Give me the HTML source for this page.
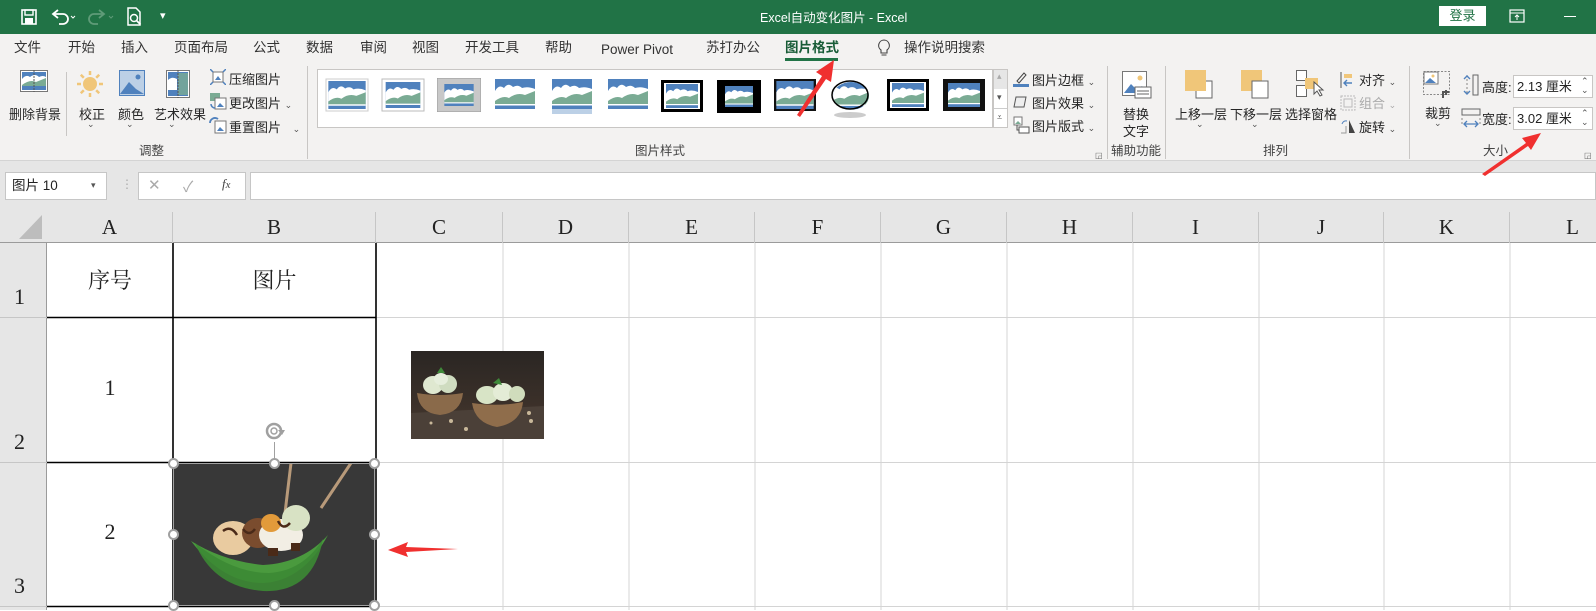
<!DOCTYPE html>
<html><head><meta charset="utf-8">
<style>
*{margin:0;padding:0;box-sizing:border-box}
body{width:1596px;height:610px;overflow:hidden;background:#fff;font-family:"Liberation Sans","Noto Sans CJK SC",sans-serif;position:relative;color:#222}
.a{position:absolute;white-space:nowrap}
.t{font-size:13px;color:#262626}
.tab{position:absolute;top:38px;font-size:13.5px;color:#333;line-height:20px;height:20px}
.ch{font-size:9px;color:#555}
.gl{position:absolute;top:140px;font-size:12.5px;color:#444}
.sep{position:absolute;top:68px;width:1px;height:88px;background:#c8c6c4}
.col{position:absolute;top:212px;height:31px;border-right:1px solid #c6c6c6;text-align:center;font-family:"Liberation Serif",serif;font-size:21px;line-height:31px;color:#222}
.cell{position:absolute;font-family:"Liberation Serif","Noto Serif CJK SC",serif;font-size:22px;color:#222;text-align:center}
.rn{position:absolute;left:0;width:46px;font-family:"Liberation Serif",serif;font-size:22px;text-align:left;padding-left:14px}
.hd{position:absolute;width:11px;height:11px;border-radius:50%;background:#fff;border:2px solid #a0a0a0}
</style></head><body>
<svg width="0" height="0" style="position:absolute">
<defs>
<symbol id="th" viewBox="0 0 40 30">
<rect x="0" y="0" width="40" height="30" fill="#4f81bd"/>
<path d="M0 12 Q4 5 9 9 Q13 3 18 8 Q23 5 27 9 Q33 7 40 10 L40 25 L0 25Z" fill="#fff"/>
<path d="M0 22 Q8 16 14 19 Q22 13 30 16 L40 12 L40 25 L0 25Z" fill="#7aab94"/>
<rect x="0" y="25" width="40" height="1.5" fill="#fff"/>
</symbol>
</defs></svg>

<!-- title bar -->
<div class="a" style="left:0;top:0;width:1596px;height:34px;background:#217346"></div>
<svg class="a" style="left:20px;top:8px" width="18" height="18" viewBox="0 0 18 18"><rect x="2" y="2" width="14" height="14" fill="none" stroke="#fff" stroke-width="1.6"/><rect x="5" y="2" width="8" height="5" fill="none" stroke="#fff" stroke-width="1.4"/><rect x="5" y="10" width="8" height="6" fill="#fff"/></svg>
<svg class="a" style="left:50px;top:8px" width="28" height="18" viewBox="0 0 28 18"><path d="M4 6 h9 a5 5 0 0 1 0 10 h-4" fill="none" stroke="#fff" stroke-width="1.8"/><path d="M8 2 L3 6 L8 10" fill="none" stroke="#fff" stroke-width="1.8"/><path d="M21 8 l2 2 l2-2" fill="none" stroke="#fff" stroke-width="1"/></svg>
<svg class="a" style="left:88px;top:8px" width="28" height="18" viewBox="0 0 28 18"><path d="M15 6 h-9 a5 5 0 0 0 0 10 h4" fill="none" stroke="#5f9b78" stroke-width="1.8"/><path d="M11 2 L16 6 L11 10" fill="none" stroke="#5f9b78" stroke-width="1.8"/><path d="M21 8 l2 2 l2-2" fill="none" stroke="#5f9b78" stroke-width="1"/></svg>
<svg class="a" style="left:126px;top:7px" width="18" height="20" viewBox="0 0 18 20"><path d="M2 1 h8 l4 4 v13 h-12z" fill="none" stroke="#fff" stroke-width="1.5"/><circle cx="8" cy="11" r="3.5" fill="none" stroke="#fff" stroke-width="1.5"/><path d="M10.5 13.5 l4 4" stroke="#fff" stroke-width="1.8"/></svg>
<div class="a" style="left:160px;top:9px;color:#fff;font-size:11px">▾</div>
<div class="a" style="left:760px;top:7px;color:#fff;font-size:12.5px">Excel自动变化图片  -  Excel</div>
<div class="a" style="left:1439px;top:6px;width:47px;height:20px;background:#fff;color:#217346;font-size:13px;text-align:center;line-height:20px">登录</div>
<svg class="a" style="left:1509px;top:9px" width="16" height="14" viewBox="0 0 16 14"><rect x="1" y="1" width="14" height="12" fill="none" stroke="#fff" stroke-width="1.2"/><path d="M1 4 h14 M8 6 v5 M6 8 l2-2 l2 2" stroke="#fff" stroke-width="1" fill="none"/></svg>
<div class="a" style="left:1564px;top:16px;width:12px;height:1px;background:#fff"></div>

<!-- tabs + ribbon -->
<div class="a" style="left:0;top:34px;width:1596px;height:129px;background:#f3f2f1"></div>
<div class="tab" style="left:14px">文件</div>
<div class="tab" style="left:68px">开始</div>
<div class="tab" style="left:121px">插入</div>
<div class="tab" style="left:174px">页面布局</div>
<div class="tab" style="left:253px">公式</div>
<div class="tab" style="left:306px">数据</div>
<div class="tab" style="left:360px">审阅</div>
<div class="tab" style="left:412px">视图</div>
<div class="tab" style="left:465px">开发工具</div>
<div class="tab" style="left:545px">帮助</div>
<div class="tab" style="left:601px;top:40px">Power Pivot</div>
<div class="tab" style="left:706px">苏打办公</div>
<div class="tab" style="left:785px;color:#185c37;font-weight:bold">图片格式</div>
<div class="a" style="left:785px;top:58px;width:53px;height:3px;background:#217346"></div>
<svg class="a" style="left:877px;top:39px" width="14" height="18" viewBox="0 0 14 18"><path d="M7 1 a5.5 5.5 0 0 1 3 10 v3 h-6 v-3 a5.5 5.5 0 0 1 3-10z" fill="none" stroke="#444" stroke-width="1.1"/><path d="M4.5 16 h5" stroke="#444"/></svg>
<div class="tab" style="left:904px">操作说明搜索</div>

<!-- Adjust group -->
<svg class="a" style="left:20px;top:70px" width="28" height="22" viewBox="0 0 28 22"><rect x="0.5" y="0.5" width="27" height="21" fill="#fff" stroke="#777"/><rect x="2" y="2" width="24" height="18" fill="#4f81bd"/><path d="M2 9 Q6 4 10 7 Q15 3 19 7 Q23 5 26 7 V16 H2Z" fill="#fff"/><path d="M2 15 Q10 9 16 12 L26 8 V16 H2Z" fill="#7aab94"/><path d="M14 0 V22" stroke="#555" stroke-dasharray="2 1"/></svg>
<div class="a t" style="left:9px;top:104px">删除背景</div>
<div class="sep" style="left:66px;top:72px;height:64px"></div>
<svg class="a" style="left:76px;top:70px" width="28" height="28" viewBox="0 0 28 28"><circle cx="14" cy="14" r="7" fill="#f0c679"/><g stroke="#f0c679" stroke-width="2.5"><path d="M14 1v4M14 23v4M1 14h4M23 14h4M4.8 4.8l3 3M20.2 20.2l3 3M4.8 23.2l3-3M20.2 7.8l3-3"/></g></svg>
<div class="a t" style="left:79px;top:104px">校正</div><div class="a ch" style="left:87px;top:119px">⌄</div>
<svg class="a" style="left:119px;top:70px" width="26" height="26" viewBox="0 0 26 26"><rect x="0.5" y="0.5" width="25" height="25" fill="#bcd0e6" stroke="#4f81bd"/><circle cx="19" cy="7" r="2.5" fill="#4f81bd"/><path d="M1 24 L10 12 L17 19 L25 24Z" fill="#4f81bd"/></svg>
<div class="a t" style="left:118px;top:104px">颜色</div><div class="a ch" style="left:126px;top:119px">⌄</div>
<svg class="a" style="left:166px;top:70px" width="24" height="28" viewBox="0 0 24 28"><rect x="0.5" y="0.5" width="23" height="27" fill="#fff" stroke="#777"/><rect x="2" y="2" width="20" height="24" fill="#4f81bd"/><path d="M2 10 Q6 6 11 9 V20 H2Z" fill="#fff"/><rect x="12" y="3" width="10" height="22" fill="#7aab94" opacity=".8"/><path d="M12 0V28" stroke="#555" stroke-dasharray="2 1"/></svg>
<div class="a t" style="left:154px;top:104px">艺术效果</div><div class="a ch" style="left:168px;top:119px">⌄</div>
<svg class="a" style="left:210px;top:69px" width="16" height="16" viewBox="0 0 16 16"><rect x="3" y="3" width="10" height="10" fill="#fff" stroke="#777"/><path d="M5 11 L8 7 L11 11Z" fill="#4f81bd"/><path d="M0 0l3 3M16 0l-3 3M0 16l3-3M16 16l-3-3" stroke="#4f81bd" stroke-width="1.5"/></svg>
<div class="a t" style="left:229px;top:69px">压缩图片</div>
<svg class="a" style="left:209px;top:92px" width="18" height="18" viewBox="0 0 18 18"><rect x="1" y="1" width="10" height="8" fill="#7aab94"/><rect x="6" y="6" width="11" height="11" fill="#fff" stroke="#777"/><path d="M8 15 L11 11 L15 15Z" fill="#4f81bd"/><path d="M2 12 a4 4 0 0 0 4 4" stroke="#4f81bd" fill="none" stroke-width="1.5"/></svg>
<div class="a t" style="left:229px;top:93px">更改图片 <span class="ch">⌄</span></div>
<svg class="a" style="left:209px;top:116px" width="18" height="18" viewBox="0 0 18 18"><rect x="6" y="5" width="11" height="12" fill="#fff" stroke="#777"/><path d="M8 15 L11 11 L15 15Z" fill="#4f81bd"/><path d="M1 7 a5 5 0 0 1 8-4" stroke="#4f81bd" fill="none" stroke-width="1.8"/></svg>
<div class="a t" style="left:229px;top:117px">重置图片 <span class="ch" style="margin-left:8px">⌄</span></div>
<div class="gl" style="left:139px">调整</div>
<div class="sep" style="left:307px;top:66px;height:93px"></div>

<!-- gallery -->
<div class="a" style="left:317px;top:69px;width:676px;height:59px;background:#fff;border:1px solid #c8c6c4"></div>
<div class="a" style="left:993px;top:69px;width:15px;height:59px;background:#fff;border:1px solid #c8c6c4"></div>
<div class="a" style="left:994px;top:70px;width:13px;height:19px;background:#e6e6e6"></div>
<div class="a ch" style="left:997px;top:71px;color:#aaa">▴</div>
<div class="a ch" style="left:997px;top:92px">▾</div>
<div class="a" style="left:994px;top:108px;width:13px;height:1px;background:#ccc"></div>
<div class="a ch" style="left:997px;top:112px">⩡</div>

<svg class="a" style="left:325px;top:78px" width="44" height="34"><rect x="1" y="1" width="42" height="32" fill="#fff" stroke="#ccc"/><use href="#th" x="3" y="3" width="38" height="28"/></svg>
<svg class="a" style="left:381px;top:78px" width="44" height="34"><rect x="1" y="1" width="42" height="32" fill="#fff" stroke="#bbb"/><use href="#th" x="4" y="4" width="36" height="26"/></svg>
<svg class="a" style="left:437px;top:78px" width="44" height="34"><rect x="0" y="0" width="44" height="34" fill="#c8c8c8" stroke="#999"/><use href="#th" x="6" y="6" width="32" height="22"/></svg>
<svg class="a" style="left:494px;top:79px" width="42" height="31"><use href="#th" x="1" y="0" width="40" height="30"/></svg>
<svg class="a" style="left:551px;top:79px" width="42" height="36"><use href="#th" x="1" y="0" width="40" height="30"/><rect x="1" y="30" width="40" height="5" fill="#bcd0e6"/></svg>
<svg class="a" style="left:607px;top:79px" width="42" height="31"><use href="#th" x="1" y="0" width="40" height="30"/></svg>
<svg class="a" style="left:661px;top:80px" width="42" height="32"><rect x="0" y="0" width="42" height="32" fill="#000"/><rect x="3" y="3" width="36" height="26" fill="#fff"/><use href="#th" x="4" y="4" width="34" height="24"/></svg>
<svg class="a" style="left:717px;top:80px" width="44" height="33"><rect x="0" y="0" width="44" height="33" fill="#000"/><use href="#th" x="6" y="6" width="32" height="21"/></svg>
<svg class="a" style="left:774px;top:79px" width="42" height="33"><rect x="0" y="0" width="42" height="32" fill="#111"/><use href="#th" x="2" y="2" width="38" height="28"/></svg>
<svg class="a" style="left:830px;top:79px" width="40" height="40"><ellipse cx="20" cy="36" rx="16" ry="3" fill="#ccc"/><clipPath id="el"><ellipse cx="20" cy="16" rx="18" ry="14"/></clipPath><use href="#th" x="1" y="1" width="38" height="30" clip-path="url(#el)"/><ellipse cx="20" cy="16" rx="18" ry="14" fill="none" stroke="#000" stroke-width="1.5"/></svg>
<svg class="a" style="left:887px;top:79px" width="42" height="32"><rect x="0" y="0" width="42" height="32" fill="#000"/><rect x="3" y="3" width="36" height="26" fill="#fff"/><use href="#th" x="4" y="4" width="34" height="24"/></svg>
<svg class="a" style="left:943px;top:79px" width="42" height="32"><rect x="0" y="0" width="42" height="32" fill="#111"/><use href="#th" x="4" y="4" width="34" height="24"/></svg>

<svg class="a" style="left:1013px;top:71px" width="16" height="16" viewBox="0 0 16 16"><path d="M4 10 L11 2 L13 4 L6 12Z" fill="none" stroke="#444"/><rect x="0" y="13" width="16" height="3" fill="#4f81bd"/></svg>
<div class="a t" style="left:1032px;top:70px">图片边框 <span class="ch">⌄</span></div>
<svg class="a" style="left:1013px;top:94px" width="16" height="16" viewBox="0 0 16 16"><path d="M3 3 h10 l-2 10 h-10z" fill="#eee" stroke="#555"/></svg>
<div class="a t" style="left:1032px;top:93px">图片效果 <span class="ch">⌄</span></div>
<svg class="a" style="left:1013px;top:116px" width="17" height="18" viewBox="0 0 17 18"><rect x="1" y="1" width="8" height="8" fill="#fff" stroke="#777"/><path d="M2 8 l3-3 l3 3z" fill="#7aab94"/><rect x="6" y="11" width="10" height="6" fill="#fff" stroke="#555"/><path d="M4 9v5h2" stroke="#555" fill="none"/></svg>
<div class="a t" style="left:1032px;top:116px">图片版式 <span class="ch">⌄</span></div>
<div class="gl" style="left:635px">图片样式</div>
<div class="a" style="left:1095px;top:151px;font-size:8px;color:#666">◲</div>
<div class="sep" style="left:1107px;top:66px;height:93px"></div>

<svg class="a" style="left:1122px;top:71px" width="30" height="30" viewBox="0 0 30 30"><rect x="0.5" y="0.5" width="24" height="24" fill="#fff" stroke="#777"/><circle cx="18" cy="7" r="2.5" fill="#f0c679"/><path d="M2 22 L9 13 L15 19 L20 15 L24 22Z" fill="#4f81bd"/><rect x="13" y="16" width="16" height="11" fill="#fff" stroke="#666"/><path d="M15 20h12M15 23h12" stroke="#666"/></svg>
<div class="a t" style="left:1123px;top:104px">替换</div>
<div class="a t" style="left:1123px;top:121px">文字</div>
<div class="gl" style="left:1111px">辅助功能</div>
<div class="sep" style="left:1165px;top:66px;height:93px"></div>

<svg class="a" style="left:1185px;top:70px" width="30" height="30"><rect x="11" y="11" width="16" height="17" fill="#fff" stroke="#666"/><rect x="0" y="0" width="21" height="21" fill="#f0c679"/></svg>
<div class="a t" style="left:1175px;top:104px">上移一层</div><div class="a ch" style="left:1196px;top:119px">⌄</div>
<svg class="a" style="left:1241px;top:70px" width="30" height="30"><rect x="0" y="0" width="21" height="21" fill="#f0c679"/><rect x="11" y="11" width="16" height="17" fill="#fff" stroke="#666"/></svg>
<div class="a t" style="left:1230px;top:104px">下移一层</div><div class="a ch" style="left:1251px;top:119px">⌄</div>
<svg class="a" style="left:1296px;top:70px" width="30" height="30"><rect x="0.5" y="0.5" width="10" height="10" fill="#fff" stroke="#666"/><rect x="0.5" y="15.5" width="10" height="11" fill="#fff" stroke="#666"/><rect x="9" y="8" width="13" height="11" fill="#f0c679"/><path d="M18 12 v12 l3-3 l3 5 l2-1 l-3-5 h4z" fill="#fff" stroke="#555"/></svg>
<div class="a t" style="left:1285px;top:104px">选择窗格</div>
<svg class="a" style="left:1340px;top:72px" width="16" height="16"><path d="M1 0v16" stroke="#555"/><rect x="4" y="2" width="8" height="4" fill="#f0c679"/><path d="M12 11 H4 M7 8 l-3 3 l3 3" stroke="#4f81bd" fill="none" stroke-width="1.4"/></svg>
<div class="a t" style="left:1359px;top:70px">对齐 <span class="ch">⌄</span></div>
<svg class="a" style="left:1340px;top:95px" width="16" height="16"><rect x="1" y="1" width="14" height="14" fill="none" stroke="#bbb" stroke-dasharray="2 1"/><rect x="4" y="4" width="8" height="8" fill="none" stroke="#bbb"/></svg>
<div class="a t" style="left:1359px;top:93px;color:#aaa">组合 <span class="ch" style="color:#aaa">⌄</span></div>
<svg class="a" style="left:1340px;top:118px" width="16" height="16"><path d="M9 2 L15 15 H9Z" fill="#444"/><path d="M1 15 L6 15 L6 8" fill="none" stroke="#999"/><path d="M2 6 a4 4 0 0 1 5-3" stroke="#4f81bd" fill="none"/></svg>
<div class="a t" style="left:1359px;top:117px">旋转 <span class="ch">⌄</span></div>
<div class="gl" style="left:1263px">排列</div>
<div class="sep" style="left:1409px;top:66px;height:93px"></div>

<svg class="a" style="left:1423px;top:71px" width="30" height="30"><rect x="0.5" y="0.5" width="26" height="23" fill="none" stroke="#888" stroke-dasharray="2 1.5"/><rect x="1" y="1" width="14" height="12" fill="#fff" stroke="#777"/><path d="M2 12 l5-5 l6 5z" fill="#4f81bd"/><circle cx="10" cy="5" r="1.5" fill="#f0c679"/><path d="M20 27 v-6 h6 M23 19 v5" stroke="#555" stroke-width="2" fill="none"/></svg>
<div class="a t" style="left:1425px;top:103px">裁剪</div><div class="a ch" style="left:1434px;top:118px">⌄</div>
<svg class="a" style="left:1462px;top:74px" width="18" height="22"><path d="M5 1 v20" stroke="#888" stroke-dasharray="2 2"/><path d="M2 5 l3-3 l3 3 M2 17 l3 3 l3-3" stroke="#4f81bd" fill="none" stroke-width="1.4"/><rect x="11" y="1" width="5" height="20" fill="none" stroke="#666"/></svg>
<div class="a t" style="left:1482px;top:77px">高度:</div>
<div class="a" style="left:1513px;top:75px;width:80px;height:23px;background:#fff;border:1px solid #c8c6c4;font-size:13px;line-height:21px;padding-left:3px">2.13 厘米</div>
<div class="a ch" style="left:1581px;top:76px">⌃</div><div class="a ch" style="left:1581px;top:85px">⌄</div>
<svg class="a" style="left:1461px;top:108px" width="20" height="20"><rect x="1" y="1" width="18" height="6" fill="none" stroke="#666"/><path d="M1 10 v6 M19 10 v6" stroke="#888" stroke-dasharray="2 2"/><path d="M4 16 h12 M6 13 l-3 3 l3 3 M14 13 l3 3 l-3 3" stroke="#4f81bd" fill="none" stroke-width="1.3"/></svg>
<div class="a t" style="left:1482px;top:109px">宽度:</div>
<div class="a" style="left:1513px;top:107px;width:80px;height:23px;background:#fff;border:1px solid #c8c6c4;font-size:13px;line-height:21px;padding-left:3px">3.02 厘米</div>
<div class="a ch" style="left:1581px;top:108px">⌃</div><div class="a ch" style="left:1581px;top:117px">⌄</div>
<div class="gl" style="left:1483px">大小</div>
<div class="a" style="left:1584px;top:151px;font-size:8px;color:#666">◲</div>

<!-- formula bar -->
<div class="a" style="left:0;top:160px;width:1596px;height:1px;background:#d4d4d4"></div>
<div class="a" style="left:0;top:161px;width:1596px;height:45px;background:#e6e6e6"></div>
<div class="a" style="left:5px;top:172px;width:102px;height:28px;background:#fff;border:1px solid #c6c6c6;font-size:13.5px;line-height:26px;padding-left:6px">图片 10</div>
<div class="a ch" style="left:91px;top:180px">▾</div>
<div class="a" style="left:121px;top:177px;color:#aaa;font-size:12px">⋮</div>
<div class="a" style="left:138px;top:172px;width:108px;height:28px;background:#fff;border:1px solid #c6c6c6"></div>
<div class="a" style="left:148px;top:176px;color:#aaa;font-size:15px">✕</div>
<div class="a" style="left:183px;top:176px;color:#aaa;font-size:15px">✓</div>
<div class="a" style="left:222px;top:176px;color:#444;font-size:13px;font-style:italic;font-family:'Liberation Serif',serif">f<small>x</small></div>
<div class="a" style="left:250px;top:172px;width:1346px;height:28px;background:#fff;border:1px solid #c6c6c6"></div>

<!-- headers -->
<div class="a" style="left:0;top:206px;width:1596px;height:37px;background:#e6e6e6"></div>
<div class="a" style="left:0;top:242px;width:1596px;height:1px;background:#9b9b9b"></div>
<svg class="a" style="left:18px;top:214px" width="25" height="26"><path d="M24 1 V25 H1Z" fill="#bdbdbd"/></svg>
<div class="a" style="left:0;top:243px;width:47px;height:367px;background:#e6e6e6;border-right:1px solid #9b9b9b"></div>
<div class="col" style="left:47px;width:126px">A</div>
<div class="col" style="left:173px;width:203px">B</div>
<div class="col" style="left:376px;width:127px">C</div>
<div class="col" style="left:503px;width:126px">D</div>
<div class="col" style="left:629px;width:126px">E</div>
<div class="col" style="left:755px;width:126px">F</div>
<div class="col" style="left:881px;width:126px">G</div>
<div class="col" style="left:1007px;width:126px">H</div>
<div class="col" style="left:1133px;width:126px">I</div>
<div class="col" style="left:1259px;width:125px">J</div>
<div class="col" style="left:1384px;width:126px">K</div>
<div class="col" style="left:1510px;width:126px">L</div>
<div class="rn" style="top:284px">1</div>
<div class="rn" style="top:429px">2</div>
<div class="rn" style="top:573px">3</div>
<div class="a" style="left:0;top:317px;width:47px;height:1px;background:#c6c6c6"></div>
<div class="a" style="left:0;top:462px;width:47px;height:1px;background:#c6c6c6"></div>
<div class="a" style="left:0;top:606px;width:47px;height:1px;background:#c6c6c6"></div>

<!-- grid lines -->
<svg class="a" style="left:47px;top:243px" width="1549" height="367">
<g stroke="#d4d4d4" stroke-width="1">
<path d="M329 0V367M456 0V367M582 0V367M708 0V367M834 0V367M960 0V367M1086 0V367M1212 0V367M1337 0V367M1463 0V367"/>
<path d="M329 74.5H1549M329 219.5H1549M329 363.5H1549"/>
</g>
<g stroke="#000" stroke-width="1.6">
<path d="M0 74.5H329M0 219.5H329M0 363.5H329M126 0V367M329 0V367"/>
</g>
</svg>
<div class="cell" style="left:47px;top:264px;width:126px">序号</div>
<div class="cell" style="left:173px;top:264px;width:203px">图片</div>
<div class="cell" style="left:47px;top:375px;width:126px">1</div>
<div class="cell" style="left:47px;top:519px;width:126px">2</div>

<!-- picture 1 -->
<svg class="a" style="left:411px;top:351px" width="133" height="88" viewBox="0 0 133 88">
<defs><linearGradient id="bg1" x1="0" y1="0" x2="0" y2="1"><stop offset="0" stop-color="#2a2623"/><stop offset=".6" stop-color="#3b3029"/><stop offset="1" stop-color="#4a3d33"/></linearGradient></defs>
<rect width="133" height="88" fill="url(#bg1)"/>
<path d="M0 62 L133 55 V88 H0Z" fill="#4b4038"/>
<path d="M6 42 Q28 46 52 42 Q50 62 29 64 Q8 62 6 42Z" fill="#8a6a4a"/>
<ellipse cx="22" cy="34" rx="10" ry="9" fill="#dfe8d0"/><ellipse cx="37" cy="33" rx="9" ry="9" fill="#cfdcc0"/><ellipse cx="30" cy="28" rx="7" ry="6" fill="#e6eedc"/>
<path d="M26 22 l4 -6 l4 6z" fill="#3f8a3a"/>
<path d="M61 52 Q88 56 112 51 Q110 72 86 76 Q64 72 61 52Z" fill="#8f6d4b"/>
<ellipse cx="76" cy="44" rx="11" ry="9" fill="#d8e4c6"/><ellipse cx="92" cy="41" rx="10" ry="9" fill="#e4ecd6"/><ellipse cx="106" cy="43" rx="8" ry="8" fill="#d0dcbc"/>
<path d="M82 32 l6 -5 l3 7z" fill="#3f8a3a"/>
<g fill="#c9b89a"><circle cx="40" cy="70" r="2"/><circle cx="55" cy="78" r="2"/><circle cx="118" cy="62" r="2"/><circle cx="120" cy="70" r="2"/><circle cx="20" cy="72" r="1.5"/></g>
</svg>

<!-- picture 2 selected -->
<svg class="a" style="left:173px;top:463px" width="202" height="143" viewBox="0 0 202 143">
<rect width="202" height="143" fill="#383838"/>
<path d="M118 0 L112 50 M178 0 L148 45" stroke="#b89a7a" stroke-width="3"/>
<path d="M18 78 Q50 120 90 120 Q130 118 155 72 Q130 100 90 102 Q50 98 18 78Z" fill="#4a9a3e"/>
<path d="M22 80 Q60 110 96 110 Q130 108 150 76 Q140 130 90 128 Q40 124 22 80Z" fill="#3c8a34" opacity=".9"/>
<ellipse cx="60" cy="75" rx="20" ry="17" fill="#e9cba0"/>
<ellipse cx="85" cy="70" rx="16" ry="15" fill="#7a4c2e"/>
<ellipse cx="108" cy="72" rx="22" ry="16" fill="#f2eee4"/>
<ellipse cx="123" cy="55" rx="14" ry="13" fill="#d8e2c4"/>
<ellipse cx="98" cy="60" rx="10" ry="9" fill="#e29a3a"/>
<path d="M50 68 q8 -6 14 4 M70 66 q6 8 12 0 M105 58 q5 10 12 2" stroke="#4a2a18" stroke-width="2.5" fill="none"/>
<rect x="95" y="85" width="10" height="8" fill="#4a2a18"/><rect x="118" y="80" width="9" height="8" fill="#4a2a18"/>
</svg>
<div class="a" style="left:173px;top:463px;width:202px;height:143px;border:1px solid #a0a0a0"></div>
<div class="a" style="left:274px;top:442px;width:1px;height:21px;background:#a0a0a0"></div>
<svg class="a" style="left:264px;top:420px" width="22" height="22" viewBox="0 0 22 22"><circle cx="10" cy="11" r="7" fill="none" stroke="#a0a0a0" stroke-width="2.5"/><circle cx="10" cy="11" r="3" fill="none" stroke="#a0a0a0" stroke-width="1.5"/><path d="M14 10 l7 0 l-3 5z" fill="#a0a0a0"/></svg>
<div class="hd" style="left:168px;top:458px"></div>
<div class="hd" style="left:269px;top:458px"></div>
<div class="hd" style="left:369px;top:458px"></div>
<div class="hd" style="left:168px;top:529px"></div>
<div class="hd" style="left:369px;top:529px"></div>
<div class="hd" style="left:168px;top:600px"></div>
<div class="hd" style="left:269px;top:600px"></div>
<div class="hd" style="left:369px;top:600px"></div>

<!-- red arrows -->
<svg class="a" style="left:0;top:0" width="1596" height="610">
<g fill="#f0302f">
<path d="M797 115 L822 76 L816 72 L834 60 L831 82 L826 79 L800 117Z"/>
<path d="M1482 174 L1526 143 L1522 138 L1541 133 L1531 150 L1528 146 L1485 176Z"/>
<path d="M388 550 L408 542 L406 547 L458 549 L406 552 L408 557Z"/>
</g>
</svg>
</body></html>
